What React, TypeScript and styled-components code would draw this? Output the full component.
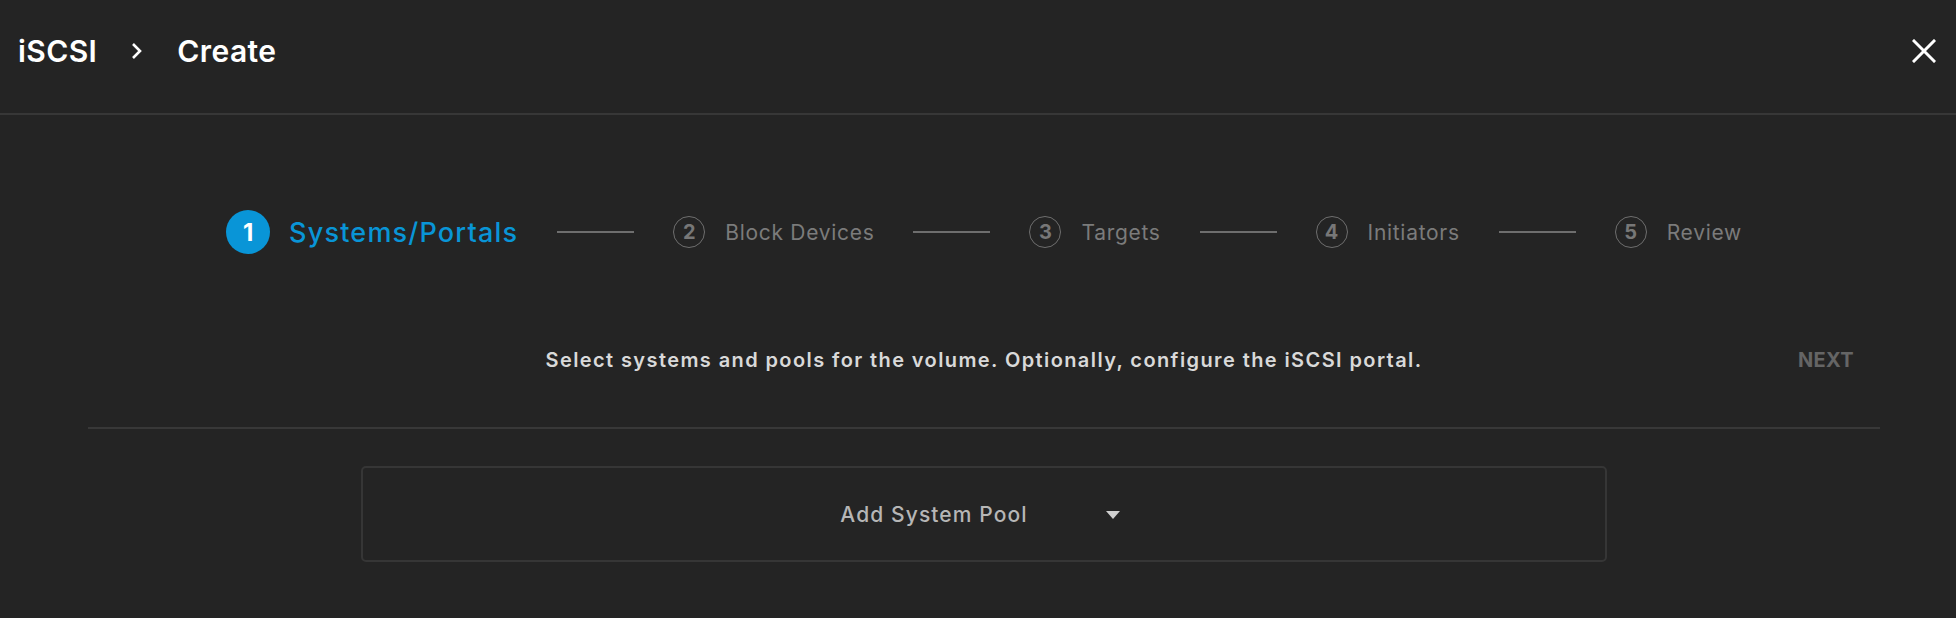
import React from "react";
import styled, { createGlobalStyle } from "styled-components";

const GlobalStyle = createGlobalStyle`
  html, body {
    margin: 0;
    padding: 0;
    background: #242424;
  }
  body {
    font-family: Inter, "Open Sans", "Liberation Sans", sans-serif;
    color: #e6e6e6;
  }
  * { box-sizing: border-box; }
`;

const Page = styled.div`
  width: 1956px;
  height: 618px;
  background: #242424;
  display: flex;
  flex-direction: column;
  overflow: hidden;
`;

const Header = styled.header`
  height: 115px;
  display: flex;
  align-items: center;
  justify-content: space-between;
  padding: 0 20px 12px 18px;
  border-bottom: 2px solid #373737;
`;

const Breadcrumb = styled.div`
  display: flex;
  align-items: center;
  gap: 33px;
`;

const Crumb = styled.span`
  font-size: 30px;
  font-weight: 600;
  color: #ffffff;
  letter-spacing: 0.4px;
`;

const IconButton = styled.button`
  background: none;
  border: none;
  padding: 0;
  display: flex;
  align-items: center;
  justify-content: center;
  width: 24px;
  height: 24px;
  cursor: pointer;
`;

const Content = styled.main`
  display: flex;
  flex-direction: column;
  margin: 0 76px 0 88px;
`;

const Stepper = styled.div`
  display: flex;
  align-items: center;
  justify-content: center;
  height: 66px;
  margin-top: 84px;
`;

const Step = styled.div<{ $active?: boolean }>`
  display: flex;
  align-items: center;
  gap: ${(p) => (p.$active ? "19px" : "20px")};
`;

const StepCircle = styled.div<{ $active?: boolean }>`
  width: ${(p) => (p.$active ? "44px" : "32px")};
  height: ${(p) => (p.$active ? "44px" : "32px")};
  border-radius: 50%;
  display: flex;
  align-items: center;
  justify-content: center;
  background: ${(p) => (p.$active ? "#0995d7" : "transparent")};
  border: ${(p) => (p.$active ? "none" : "1.5px solid #6e6e6e")};
  color: ${(p) => (p.$active ? "#ffffff" : "#777777")};
  font-size: ${(p) => (p.$active ? "24px" : "20px")};
  font-weight: 700;
`;

const StepLabel = styled.span<{ $active?: boolean }>`
  font-size: ${(p) => (p.$active ? "27px" : "21px")};
  font-weight: ${(p) => (p.$active ? 500 : 400)};
  color: ${(p) => (p.$active ? "#0995d7" : "#7b7b7b")};
  letter-spacing: ${(p) => (p.$active ? "1.2px" : "0.7px")};
`;

const Connector = styled.div`
  width: 77px;
  height: 2px;
  background: #6e6e6e;
  margin: 0 39px;
`;

const Toolbar = styled.div`
  position: relative;
  display: flex;
  align-items: center;
  justify-content: center;
  height: 60px;
  margin-top: 65px;
`;

const Description = styled.p`
  margin: 0;
  font-size: 20px;
  font-weight: 600;
  color: #d9d9d9;
  letter-spacing: 1.4px;
`;

const NextButton = styled.button`
  position: absolute;
  right: 26px;
  top: 50%;
  transform: translateY(-50%);
  background: none;
  border: none;
  padding: 0;
  font-family: inherit;
  font-size: 20px;
  font-weight: 700;
  color: #656565;
  letter-spacing: 0.3px;
  cursor: default;
`;

const Divider = styled.hr`
  margin: 37px 0 0;
  border: none;
  height: 2px;
  background: #383838;
`;

const PoolCard = styled.div`
  align-self: center;
  width: 1246px;
  height: 96px;
  margin-top: 37px;
  border: 2px solid #363636;
  border-radius: 5px;
  background: #242424;
  display: flex;
  align-items: center;
  justify-content: center;
  gap: 78px;
`;

const PoolLabel = styled.span`
  font-size: 21px;
  font-weight: 500;
  color: #b6b6b6;
  letter-spacing: 1.1px;
`;

const Caret = styled.span`
  width: 0;
  height: 0;
  border-left: 7.5px solid transparent;
  border-right: 7.5px solid transparent;
  border-top: 8px solid #cfcfcf;
  margin: 2px 8px 0 0;
`;

const steps = ["Systems/Portals", "Block Devices", "Targets", "Initiators", "Review"];

export default function App() {
  return (
    <Page>
      <GlobalStyle />
      <Header>
        <Breadcrumb>
          <Crumb>iSCSI</Crumb>
          <svg width="14" height="20" viewBox="0 0 14 20">
            <polyline points="3,3 10,10 3,17" fill="none" stroke="#ffffff" strokeWidth="2.6" />
          </svg>
          <Crumb>Create</Crumb>
        </Breadcrumb>
        <IconButton aria-label="Close">
          <svg width="24" height="24" viewBox="0 0 24 24">
            <path d="M2 2 L22 22 M22 2 L2 22" stroke="#ffffff" strokeWidth="3" strokeLinecap="square" />
          </svg>
        </IconButton>
      </Header>
      <Content>
        <Stepper>
          {steps.map((s, i) => (
            <React.Fragment key={s}>
              {i > 0 && <Connector />}
              <Step $active={i === 0}>
                <StepCircle $active={i === 0}>{i + 1}</StepCircle>
                <StepLabel $active={i === 0}>{s}</StepLabel>
              </Step>
            </React.Fragment>
          ))}
        </Stepper>
        <Toolbar>
          <Description>
            Select systems and pools for the volume. Optionally, configure the iSCSI portal.
          </Description>
          <NextButton disabled>NEXT</NextButton>
        </Toolbar>
        <Divider />
        <PoolCard>
          <PoolLabel>Add System Pool</PoolLabel>
          <Caret />
        </PoolCard>
      </Content>
    </Page>
  );
}
